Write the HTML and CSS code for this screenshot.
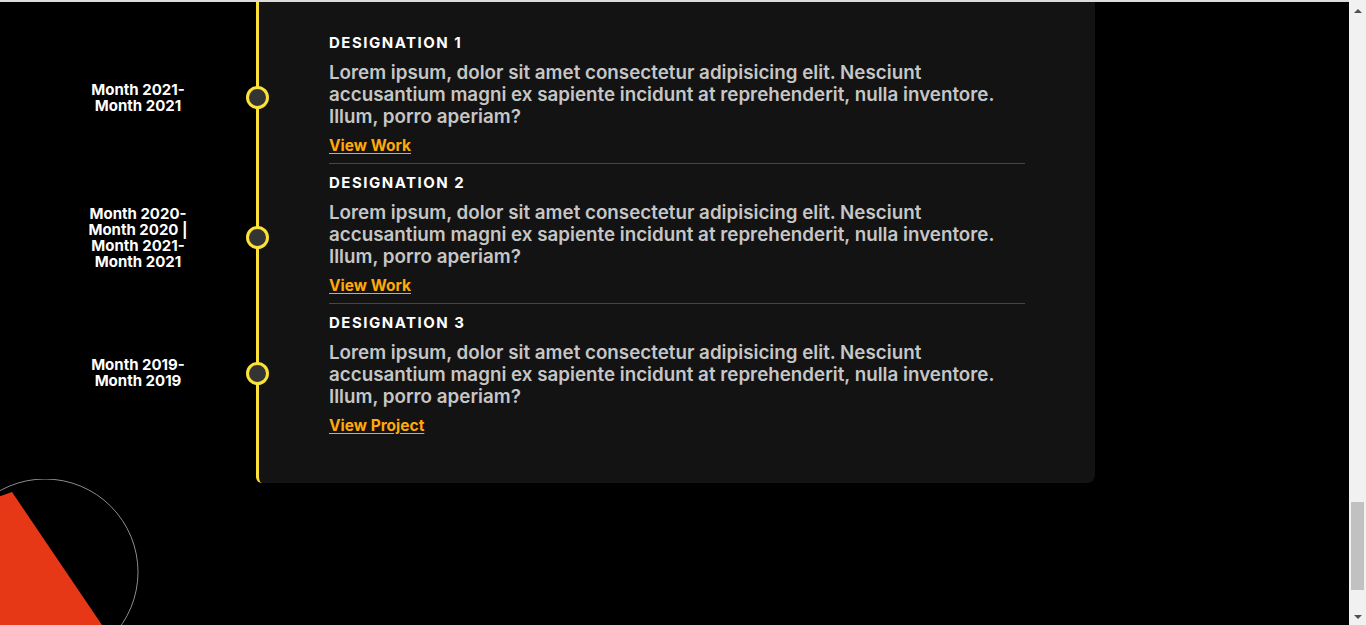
FILE: index.html
```html
<!DOCTYPE html>
<html lang="en">
<head>
<meta charset="utf-8">
<title>Experience</title>
<link rel="stylesheet" href="styles.css">
</head>
<body>
<div class="page">
  <main class="main">
    <div class="topline"></div>
    <section class="timeline">
      <div class="card"></div>

      <div class="date r1">Month 2021-Month 2021</div>
      <span class="dot r1"></span>
      <div class="entry r1">
        <h3 class="title">DESIGNATION 1</h3>
        <p class="desc">Lorem ipsum, dolor sit amet consectetur adipisicing elit. Nesciunt accusantium magni ex sapiente incidunt at reprehenderit, nulla inventore. Illum, porro aperiam?</p>
        <a class="link" href="#">View Work</a>
      </div>

      <div class="date r2">Month 2020-Month 2020 | Month 2021-Month 2021</div>
      <span class="dot r2"></span>
      <div class="entry r2">
        <h3 class="title">DESIGNATION 2</h3>
        <p class="desc">Lorem ipsum, dolor sit amet consectetur adipisicing elit. Nesciunt accusantium magni ex sapiente incidunt at reprehenderit, nulla inventore. Illum, porro aperiam?</p>
        <a class="link" href="#">View Work</a>
      </div>

      <div class="date r3">Month 2019-Month 2019</div>
      <span class="dot r3"></span>
      <div class="entry r3 last">
        <h3 class="title">DESIGNATION 3</h3>
        <p class="desc">Lorem ipsum, dolor sit amet consectetur adipisicing elit. Nesciunt accusantium magni ex sapiente incidunt at reprehenderit, nulla inventore. Illum, porro aperiam?</p>
        <a class="link" href="#">View Project</a>
      </div>
    </section>
    <div class="deco">
      <svg width="160" height="146" viewBox="0 0 160 146" aria-hidden="true">
        <circle cx="45" cy="93" r="93" fill="none" stroke="#8c8c8c" stroke-width="1"/>
        <polygon points="-2,18 12,13 102,146 -2,146" fill="#e63817"/>
      </svg>
    </div>
  </main>
  <aside class="scrollbar">
    <span class="arrow up"></span>
    <div class="track"><div class="thumb"></div></div>
    <span class="arrow down"></span>
  </aside>
</div>
</body>
</html>
```
FILE: styles.css
```css
* { box-sizing: border-box; }
html, body { margin: 0; padding: 0; }
body {
  background: #000;
  font-family: Inter, "Open Sans", sans-serif;
  height: 625px;
  overflow: hidden;
}
.page {
  display: flex;
  height: 625px;
}
.main {
  flex: 1;
  min-width: 0;
  overflow: hidden;
}
.topline {
  height: 2px;
  background: #dcdcdc;
}
.timeline {
  position: relative;
  display: grid;
  grid-template-columns: 256px 839px;
  grid-template-rows: 22px auto auto auto 41px;
  row-gap: 7px;
}
.card {
  grid-column: 2;
  grid-row: 1 / -1;
  background: #131313;
  border-left: 3px solid #fbe13a;
  border-radius: 0 0 8px 6px;
}
.r1 { grid-row: 2; }
.r2 { grid-row: 3; }
.r3 { grid-row: 4; }
.date {
  grid-column: 1;
  align-self: center;
  justify-self: start;
  margin-left: 83px;
  width: 110px;
  text-align: center;
  color: #fff;
  font-weight: 700;
  font-size: 15px;
  line-height: 16px;
}
.dot {
  grid-column: 2;
  align-self: center;
  justify-self: start;
  margin-left: -10px;
  width: 23px;
  height: 23px;
  border-radius: 50%;
  border: 3px solid #fbe13a;
  background: #343434;
  position: relative;
  z-index: 1;
}
.entry {
  grid-column: 2;
  margin: 0 70px 0 73px;
  padding: 3px 0 8px;
  border-bottom: 1px solid #474747;
  line-height: 18px;
}
.entry.last {
  padding-bottom: 0;
  border-bottom: 0;
}
.title {
  margin: 0 0 10px;
  color: #fff;
  font-size: 15px;
  line-height: 18px;
  font-weight: 700;
  letter-spacing: 1.5px;
}
.desc {
  margin: 0 0 9px;
  color: #c6c6c6;
  font-size: 18.8px;
  line-height: 22px;
  font-weight: 600;
}
.link {
  display: inline-block;
  vertical-align: top;
  color: #ffa90a;
  font-size: 15.5px;
  line-height: 18px;
  font-weight: 700;
  text-decoration: underline;
  text-underline-offset: 2px;
}
.deco {
  margin-top: -4px;
}
.deco svg { display: block; }
.scrollbar {
  width: 17px;
  flex: none;
  background: #f1f1f1;
  display: flex;
  flex-direction: column;
  align-items: center;
}
.arrow {
  width: 0;
  height: 0;
  border-left: 4px solid transparent;
  border-right: 4px solid transparent;
}
.arrow.up {
  margin-top: 9px;
  border-bottom: 4px solid #505050;
}
.arrow.down {
  margin-bottom: 6px;
  border-top: 4px solid #505050;
}
.track {
  flex: 1;
  width: 100%;
  padding: 489px 2px 0;
}
.thumb {
  height: 88px;
  background: #c1c1c1;
}
```
